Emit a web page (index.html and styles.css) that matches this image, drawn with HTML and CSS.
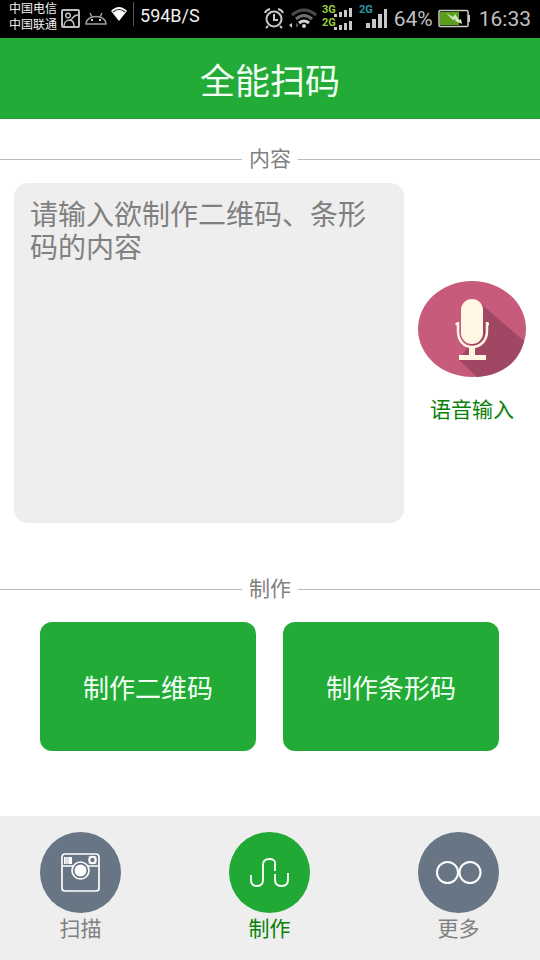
FILE: index.html
```html
<!DOCTYPE html>
<html lang="zh-CN">
<head>
<meta charset="utf-8">
<meta name="viewport" content="width=device-width, initial-scale=1">
<title>全能扫码</title>
<link rel="stylesheet" href="styles.css">
</head>
<body>
<div class="status">
  <div class="status-left">
    <div class="carriers"><span>中国电信</span><span>中国联通</span></div>
    <svg width="20" height="38" viewBox="0 0 20 38" fill="none" stroke="#bdbdbd" stroke-width="2"><rect x="1" y="10" width="17" height="17" rx="1"/><circle cx="7" cy="15.500" r="2.300" stroke-width="1.500"/><path d="M3 26C3 22 6 20 9 20C12 20 11 15 17 15M9 20Q13 21 13 26" stroke-width="1.500"/></svg>
    <svg width="22" height="38" viewBox="0 0 22 38" fill="none" stroke="#9e9e9e" stroke-width="1.500"><path d="M1 24C1 14 21 14 21 24ZM5 13L7 17M17 13L15 17"/><path d="M7 19v2M15 19v2" stroke="#ccc" stroke-width="2"/></svg>
    <svg width="16" height="38" viewBox="0 0 16 38"><path d="M0 11Q8 3 16 11L8 21Z" fill="#fff"/><path d="M2 12Q8 7 14 12" fill="none" stroke="#222" stroke-width="1.200"/></svg>
    <span class="rule"></span>
    <span class="speed">594B/S</span>
  </div>
  <div class="status-right">
    <svg width="20" height="38" viewBox="0 0 20 38" fill="none" stroke="#c8c8c8" stroke-width="2"><circle cx="10" cy="19" r="7.500"/><path d="M10 14v6h4M4 26l-2 2M16 26l2 2M1 13q1-3 5-4M19 13q-1-3-5-4"/></svg>
    <svg width="28" height="38" viewBox="0 0 28 38" fill="none" stroke-width="3"><path d="M3 15Q15 5 27 15" stroke="#4c4c4c"/><path d="M7 19Q15 12 23 19" stroke="#707070"/><path d="M10 23Q15 19 20 23" stroke="#d0d0d0"/><circle cx="15" cy="26" r="2" fill="#d0d0d0"/><path d="M0 25l3-2v5z" fill="#ccc"/><path d="M7 23v5l3-3z" fill="#555"/></svg>
    <svg class="signal" width="32" height="38" viewBox="0 0 32 38"><text x="0" y="13" fill="#9ccc3c">3G</text><text x="0" y="26" fill="#9ccc3c">2G</text><path d="M12 14h3v3h-3zM17 12h3v5h-3zM22 10h3v7h-3zM27 8h3v9h-3zM12 27h3v3h-3zM17 25h3v5h-3zM22 23h3v7h-3zM27 21h3v9h-3z" fill="#c8c8c8"/></svg>
    <svg class="signal" width="30" height="38" viewBox="0 0 30 38"><text x="0" y="13" fill="#2a9aa5">2G</text><path d="M7 23h4v5H7zM13 19h4v9h-4zM19 14h4v14h-4zM25 9h3v19h-3z" fill="#c8c8c8"/></svg>
    <span class="reading">64%</span>
    <svg width="32" height="38" viewBox="0 0 32 38"><rect x="1" y="10.500" width="29" height="16" rx="1" fill="none" stroke="#c8cdc0" stroke-width="1.500"/><path d="M2 12h19v13H2z" fill="#5a9e1c"/><path d="M31 15v7" stroke="#c8cdc0" stroke-width="2"/><path d="M8 13l7 4 2-3 4 6 2-1 1 5-7-3 1-2-3 1z" fill="#d4e3c4"/></svg>
    <span class="reading">16:33</span>
  </div>
</div>
<header class="title-bar"><h1>全能扫码</h1></header>
<main>
  <h2 class="divider"><label for="content">内容</label></h2>
  <div class="compose">
    <textarea id="content" placeholder="请输入欲制作二维码、条形码的内容"></textarea>
    <button class="voice" type="button">
      <svg viewBox="0 0 108 96">
        <ellipse cx="54" cy="48" rx="54" ry="48" fill="#c65b7c"/>
        <path d="M62 22L106 60C102 80 84 95 59 96L41 79L54 60Z" fill="#9f4763"/>
        <rect x="43" y="18" width="22" height="45" rx="11" fill="#fff6e4"/>
        <path d="M40 41V50C40 60 46 66 54 66S69 60 69 50V41M37.500 43H41M68 43H71" fill="none" stroke="#fff6e4" stroke-width="2.500"/>
        <path d="M51 66h6v8h11v5H41v-5h10z" fill="#fff6e4"/>
      </svg>
      <span>语音输入</span>
    </button>
  </div>
  <h2 class="divider make">制作</h2>
  <div class="actions">
    <button type="button">制作二维码</button>
    <button type="button">制作条形码</button>
  </div>
</main>
<nav class="tabs">
  <a href="#scan">
    <svg viewBox="0 0 81 81"><circle cx="40.500" cy="40.500" r="40.500" fill="#687585"/><g fill="none" stroke="#fff" stroke-width="1.700"><rect x="22" y="22" width="37" height="37" rx="3"/><path d="M22 34h11M48 34h11"/><circle cx="40.500" cy="38.500" r="8.500"/><circle cx="52.500" cy="28" r="3.200" stroke-width="2"/><path d="M49 24.500h7v7h-7z" stroke-width=".6"/></g><path d="M24 25h8v7h-8z" fill="#fff"/><path d="M26 25v7M28 25v7" stroke="#8b96a3" stroke-width=".6"/><circle cx="40.500" cy="38.500" r="6" fill="#fff"/></svg>
    <span>扫描</span>
  </a>
  <a class="active" href="#make" aria-current="page">
    <svg viewBox="0 0 81 81"><circle cx="40.500" cy="40.500" r="40.500" fill="#21a936"/><path d="M22 43V48Q22 54 28 54T34 48V33Q34 27 40.500 27T46 33V39M46 42V48Q46 54 52.500 54T59 48V41" fill="none" stroke="#fff" stroke-width="1.800"/></svg>
    <span>制作</span>
  </a>
  <a href="#more">
    <svg viewBox="0 0 81 81"><circle cx="40.500" cy="40.500" r="40.500" fill="#687585"/><g fill="none" stroke="#fff" stroke-width="2"><circle cx="29.500" cy="40.500" r="10.500"/><circle cx="52" cy="40.500" r="10.500"/></g></svg>
    <span>更多</span>
  </a>
</nav>
</body>
</html>
```
FILE: styles.css
```css
* { box-sizing: border-box; }

body {
  margin: 0;
  min-height: 100vh;
  display: flex;
  flex-direction: column;
  background: #fff;
  color: #808080;
  font-family: Roboto, "Noto Sans CJK SC", sans-serif;
}

h1, h2 { margin: 0; font-weight: 400; }
svg { display: block; flex: none; }
button { border: 0; padding: 0; font: inherit; cursor: pointer; }

.status {
  height: 38px;
  padding: 0 9px;
  display: flex;
  justify-content: space-between;
  background: #000;
  color: #c0c0c0;
  line-height: 38px;
}
.status-left, .status-right { display: flex; align-items: flex-start; }
.status-left { gap: 4px; color: #f0f0f0; }
.status-right { gap: 5px; }
.carriers {
  display: flex;
  flex-direction: column;
  padding-top: 1px;
  font-size: 12px;
  line-height: 16px;
}
.rule { width: 1px; height: 24px; margin: 2px 2px 0; background: #555; }
.speed { font-size: 18px; line-height: 32px; }
.reading { font-size: 21px; }
.reading:last-child { margin-left: 4px; }
.signal { font-size: 11px; font-weight: 700; }

.title-bar {
  height: 81px;
  padding-top: 10px;
  display: flex;
  align-items: center;
  justify-content: center;
  background: #22ab37;
  border-bottom: 1px solid #2f9a40;
  color: #f2fff4;
}
.title-bar h1 { font-size: 35px; line-height: 48px; }

main { flex: 1; padding-top: 24px; }
.divider {
  display: flex;
  align-items: center;
  gap: 7px;
  font-size: 21px;
  line-height: 32px;
}
.divider::before, .divider::after {
  content: "";
  flex: 1;
  height: 1px;
  background: #bdbdbd;
}
.make { margin-top: 50px; }

.compose {
  display: flex;
  align-items: center;
  gap: 14px;
  padding: 8px 14px 0;
}
.compose textarea {
  flex: 1;
  min-width: 0;
  height: 340px;
  padding: 16px;
  border: 0;
  border-radius: 14px;
  background: #eee;
  color: #333;
  font: inherit;
  font-size: 28px;
  line-height: 33px;
  resize: none;
}
.compose textarea::placeholder { color: #808080; opacity: 1; }
.voice {
  flex: none;
  width: 108px;
  background: none;
  color: #0a800a;
  font-size: 21px;
  line-height: 32px;
}
.voice svg { width: 100%; margin-bottom: 17px; }

.actions {
  display: grid;
  grid-template-columns: 1fr 1fr;
  gap: 27px;
  padding: 17px 41px 17px 40px;
}
.actions button {
  height: 129px;
  border-radius: 12px;
  background: #22ab37;
  color: #f2fff4;
  font-size: 26px;
}

.tabs {
  display: flex;
  justify-content: space-between;
  padding: 16px 41px 15px 40px;
  background: #eee;
}
.tabs a {
  display: flex;
  flex-direction: column;
  align-items: center;
  color: #808080;
  font-size: 21px;
  line-height: 32px;
  text-decoration: none;
}
.tabs svg { width: 81px; }
.tabs .active { color: #0a800a; }
```
